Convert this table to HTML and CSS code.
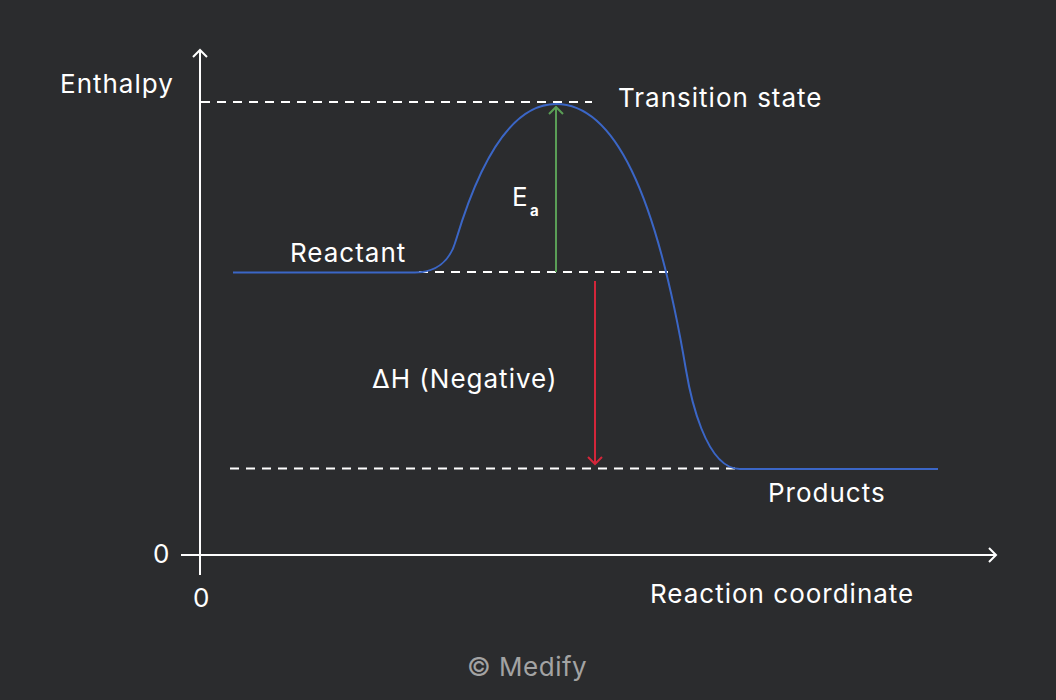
FILE: index.html
```html
<!DOCTYPE html>
<html lang="en">
<head>
<meta charset="utf-8">
<title>Enthalpy diagram</title>
<link rel="stylesheet" href="styles.css">
</head>
<body>
<main class="stage">
  <svg class="diagram" width="1056" height="700" viewBox="0 0 1056 700" xmlns="http://www.w3.org/2000/svg">
    <!-- axes -->
    <g class="axis">
      <line x1="200" y1="50" x2="200" y2="575"/>
      <polyline points="193,57 200,50 207,57"/>
      <line x1="181" y1="555" x2="996" y2="555"/>
      <polyline points="989,548 996,555 989,562"/>
    </g>
    <!-- dashed guides -->
    <g class="dash">
      <line x1="201" y1="102" x2="592" y2="102"/>
      <line x1="419" y1="272" x2="670" y2="272"/>
      <line x1="230" y1="468.5" x2="742" y2="468.5"/>
    </g>
    <!-- curve -->
    <path class="curve" d="M233,272.5 H415 C435,272.5 450,262 456,240 C474,180 505,104 556,104 C614,104 656,192 686,370 C690,394 705,469 740,469 H938"/>
    <!-- activation arrow -->
    <g class="green">
      <line x1="556" y1="272" x2="556" y2="107"/>
      <polyline points="549,114 556,107 563,114"/>
    </g>
    <!-- enthalpy arrow -->
    <g class="red">
      <line x1="595" y1="281" x2="595" y2="464"/>
      <polyline points="588,457 595,464 602,457"/>
    </g>
    <!-- labels -->
    <text class="label" x="60" y="93">Enthalpy</text>
    <text class="label" x="618" y="107">Transition state</text>
    <text class="label" x="290" y="262">Reactant</text>
    <text class="label" x="512" y="206">E</text>
    <text class="sub" x="530" y="216">a</text>
    <text class="label" x="372" y="388">ΔH (Negative)</text>
    <text class="label" x="768" y="502">Products</text>
    <text class="label" x="650" y="603">Reaction coordinate</text>
    <text class="label" x="153" y="563">0</text>
    <text class="label" x="193" y="607">0</text>
    <text class="credit" x="467" y="676">© Medify</text>
  </svg>
</main>
</body>
</html>
```
FILE: styles.css
```css
html, body {
  margin: 0;
  padding: 0;
  background: #2b2c2e;
}
.stage {
  width: 1056px;
  height: 700px;
  overflow: hidden;
  background: #2b2c2e;
}
.diagram {
  display: block;
}
.axis line, .axis polyline {
  stroke: #ffffff;
  stroke-width: 2;
  fill: none;
}
.dash line {
  stroke: #ffffff;
  stroke-width: 2;
  stroke-dasharray: 9 7;
}
.curve {
  fill: none;
  stroke: #3b66c6;
  stroke-width: 2;
}
.green line, .green polyline {
  stroke: #5a9e56;
  stroke-width: 2;
  fill: none;
}
.red line, .red polyline {
  stroke: #d3263a;
  stroke-width: 2;
  fill: none;
}
.label {
  font-family: Inter, "Liberation Sans", sans-serif;
  font-size: 26px;
  letter-spacing: 1px;
  fill: #ffffff;
}
.sub {
  font-family: Inter, "Liberation Sans", sans-serif;
  font-size: 15px;
  font-weight: 700;
  fill: #ffffff;
}
.credit {
  font-family: Inter, "Liberation Sans", sans-serif;
  font-size: 26px;
  letter-spacing: 0.5px;
  fill: #a3a3a3;
}
```
